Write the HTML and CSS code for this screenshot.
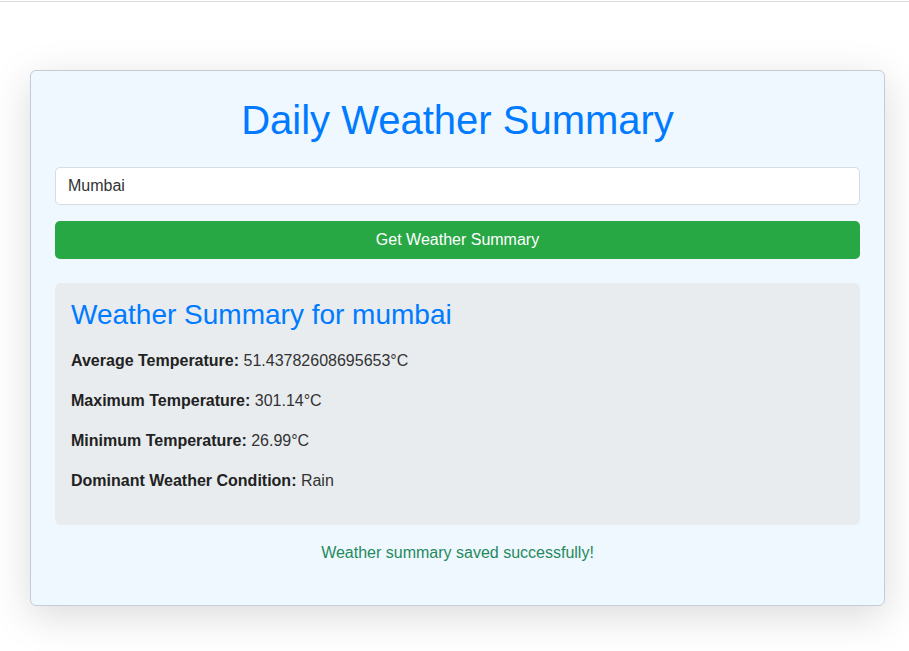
FILE: index.html
```html
<!DOCTYPE html>
<html lang="en">
<head>
<meta charset="utf-8">
<title>Daily Weather Summary</title>
<link rel="stylesheet" href="styles.css">
</head>
<body>
<div class="topline"></div>
<div class="card">
  <h1 class="title">Daily Weather Summary</h1>
  <input class="city" type="text" value="Mumbai">
  <button class="btn">Get Weather Summary</button>
  <div class="result">
    <h2 class="result-title">Weather Summary for mumbai</h2>
    <p class="row"><strong>Average Temperature:</strong> 51.43782608695653°C</p>
    <p class="row"><strong>Maximum Temperature:</strong> 301.14°C</p>
    <p class="row"><strong>Minimum Temperature:</strong> 26.99°C</p>
    <p class="row"><strong>Dominant Weather Condition:</strong> Rain</p>
  </div>
  <p class="message">Weather summary saved successfully!</p>
</div>
</body>
</html>
```
FILE: styles.css
```css
* { box-sizing: border-box; }
html, body { margin: 0; padding: 0; background: #ffffff; }
body {
  font-family: "Liberation Sans", Arial, sans-serif;
  font-size: 16px;
  color: #333;
  min-height: 651px;
  padding-bottom: 46px;
}
.topline {
  margin-top: 1px;
  height: 1px;
  background: #dcdcdc;
}
.card {
  width: 855px;
  margin: 68px 0 0 30px;
  background: #eff7ff;
  border: 1px solid #c6ccd4;
  border-radius: 6px;
  padding: 26px 24px 24px 24px;
  box-shadow: 0 10px 40px rgba(0, 0, 0, 0.15);
  display: flex;
  flex-direction: column;
}
.title {
  margin: 0 0 24px;
  font-size: 40px;
  line-height: 46px;
  font-weight: normal;
  color: #007bff;
  text-align: center;
}
.city {
  display: block;
  width: 100%;
  height: 38px;
  padding: 0 12px;
  font-family: inherit;
  font-size: 16px;
  color: #333;
  background: #fff;
  border: 1px solid #d6dce2;
  border-radius: 5px;
  margin: 0 0 16px;
}
.btn {
  display: block;
  width: 100%;
  height: 38px;
  font-family: inherit;
  font-size: 16px;
  color: #fff;
  background: #28a745;
  border: none;
  border-radius: 5px;
  margin: 0 0 24px;
}
.result {
  background: #e8ecef;
  border-radius: 6px;
  padding: 16px;
}
.result-title {
  margin: 0 0 18px;
  font-size: 28px;
  line-height: 32px;
  font-weight: normal;
  color: #007bff;
}
.row {
  margin: 16px 0;
  line-height: 24px;
  color: #333;
}
.row strong { color: #222; }
.message {
  margin: 16px 0;
  line-height: 24px;
  text-align: center;
  color: #1f8a5c;
}
```
